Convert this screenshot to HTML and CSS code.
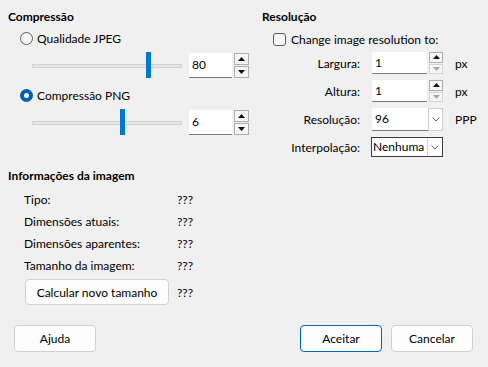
FILE: index.html
```html
<!DOCTYPE html>
<html lang="pt">
<head>
<meta charset="utf-8">
<title>Compressão de imagem</title>
<link rel="stylesheet" href="styles.css">
</head>
<body>
<div class="dialog">
  <div class="top">
    <section class="compress">
      <h2>Compressão</h2>
      <div class="radio-row"><span class="radio"></span><span>Qualidade JPEG</span></div>
      <div class="slider-row">
        <div class="slider"><div class="track"></div><div class="thumb" style="left:114px"></div></div>
        <div class="spin">
          <div class="field">80</div>
          <div class="btns">
            <span class="b"><svg width="7" height="4" viewBox="0 0 7 4"><path d="M0 4 L3.5 0 L7 4Z" fill="#111"/></svg></span>
            <span class="b"><svg width="7" height="4" viewBox="0 0 7 4"><path d="M0 0 L3.5 4 L7 0Z" fill="#111"/></svg></span>
          </div>
        </div>
      </div>
      <div class="radio-row second"><span class="radio on"></span><span>Compressão PNG</span></div>
      <div class="slider-row">
        <div class="slider"><div class="track"></div><div class="thumb" style="left:88px"></div></div>
        <div class="spin">
          <div class="field">6</div>
          <div class="btns">
            <span class="b"><svg width="7" height="4" viewBox="0 0 7 4"><path d="M0 4 L3.5 0 L7 4Z" fill="#111"/></svg></span>
            <span class="b"><svg width="7" height="4" viewBox="0 0 7 4"><path d="M0 0 L3.5 4 L7 0Z" fill="#111"/></svg></span>
          </div>
        </div>
      </div>
    </section>
    <section class="resol">
      <h2>Resolução</h2>
      <div class="check-row"><span class="check"></span><span>Change image resolution to:</span></div>
      <div class="form">
        <span class="lbl">Largura:</span>
        <div class="spin small">
          <div class="field">1</div>
          <div class="btns">
            <span class="b"><svg width="7" height="4" viewBox="0 0 7 4"><path d="M0 4 L3.5 0 L7 4Z" fill="#111"/></svg></span>
            <span class="b dis"><svg width="7" height="4" viewBox="0 0 7 4"><path d="M0 0 L3.5 4 L7 0Z" fill="#a8a8a8"/></svg></span>
          </div>
        </div>
        <span class="unit">px</span>

        <span class="lbl">Altura:</span>
        <div class="spin small">
          <div class="field">1</div>
          <div class="btns">
            <span class="b"><svg width="7" height="4" viewBox="0 0 7 4"><path d="M0 4 L3.5 0 L7 4Z" fill="#111"/></svg></span>
            <span class="b dis"><svg width="7" height="4" viewBox="0 0 7 4"><path d="M0 0 L3.5 4 L7 0Z" fill="#a8a8a8"/></svg></span>
          </div>
        </div>
        <span class="unit">px</span>

        <span class="lbl">Resolução:</span>
        <div class="combo">
          <div class="cfield">96</div>
          <span class="cbtn"><svg width="8" height="5" viewBox="0 0 8 5"><path d="M0.5 0.5 L4 4 L7.5 0.5" fill="none" stroke="#666" stroke-width="1"/></svg></span>
        </div>
        <span class="unit">PPP</span>

        <span class="lbl">Interpolação:</span>
        <div class="combo framed">
          <div class="cfield">Nenhuma</div>
          <span class="cbtn"><svg width="8" height="5" viewBox="0 0 8 5"><path d="M0.5 0.5 L4 4 L7.5 0.5" fill="none" stroke="#666" stroke-width="1"/></svg></span>
        </div>
        <span class="unit"></span>
      </div>
    </section>
  </div>

  <section class="info">
    <h2>Informações da imagem</h2>
    <div class="info-grid">
      <span>Tipo:</span><span>???</span>
      <span>Dimensões atuais:</span><span>???</span>
      <span>Dimensões aparentes:</span><span>???</span>
      <span>Tamanho da imagem:</span><span>???</span>
    </div>
    <div class="calc-row">
      <button class="btn calc">Calcular novo tamanho</button>
      <span>???</span>
    </div>
  </section>

  <div class="footer">
    <button class="btn">Ajuda</button>
    <div class="right-btns">
      <button class="btn default">Aceitar</button>
      <button class="btn">Cancelar</button>
    </div>
  </div>
</div>
</body>
</html>
```
FILE: styles.css
```css
* { box-sizing: border-box; }

html, body {
  margin: 0;
  width: 488px;
  height: 367px;
  overflow: hidden;
}

body {
  background: #f0f0f0;
  font-family: Lato, "Segoe UI", "Noto Sans", sans-serif;
  font-size: 12px;
  color: #000;
}

.dialog {
  height: 367px;
  display: flex;
  flex-direction: column;
}

.top {
  display: flex;
  padding: 9px 0 0 8px;
}

h2 {
  margin: 0;
  font-size: 12px;
  font-weight: 700;
  line-height: 16px;
}

.compress {
  width: 254px;
}

.radio-row {
  display: flex;
  align-items: center;
  gap: 4px;
  height: 20px;
  margin-top: 3px;
  padding-left: 12px;
}

.radio-row.second {
  margin-top: 7px;
}

.radio {
  width: 13px;
  height: 13px;
  border-radius: 50%;
  border: 1px solid #5c5c5c;
  background: #f7f7f7;
  flex: none;
}

.radio.on {
  background: #fff;
  border: 4px solid #005fb8;
}

.slider-row {
  display: flex;
  align-items: center;
  height: 25px;
  margin-top: 5px;
  padding-left: 24px;
}

.slider {
  position: relative;
  width: 150px;
  height: 25px;
}

.track {
  position: absolute;
  left: 0;
  right: 0;
  top: 11px;
  height: 4px;
  background: #e7e7e7;
  border: 1px solid #d2d2d2;
}

.thumb {
  position: absolute;
  top: -1px;
  width: 5px;
  height: 26px;
  background: #0078d4;
}

.spin {
  display: flex;
  margin-left: 7px;
  height: 25px;
}

.field {
  width: 43px;
  height: 100%;
  background: #fff;
  border-bottom: 1px solid #7a7a7a;
  padding-left: 3px;
  line-height: 24px;
}

.btns {
  display: flex;
  flex-direction: column;
  gap: 1px;
  width: 15px;
  margin-left: 2px;
}

.btns .b {
  flex: 1;
  border: 1px solid #adadad;
  background: #f6f6f6;
  display: flex;
  align-items: center;
  justify-content: center;
}

.btns .b.dis {
  border-color: #d4d4d4;
}

.resol {
  flex: 1;
}

.check-row {
  display: flex;
  align-items: center;
  gap: 5px;
  height: 20px;
  margin-top: 4px;
  padding-left: 11px;
}

.check {
  width: 13px;
  height: 13px;
  border: 1px solid #5c5c5c;
  border-radius: 3px;
  background: #f7f7f7;
  flex: none;
}

.form {
  display: grid;
  grid-template-columns: 98px 71px auto;
  grid-auto-rows: 22px;
  column-gap: 12px;
  row-gap: 6px;
  align-items: center;
  margin-top: 3px;
}

.lbl {
  text-align: right;
}

.spin.small {
  margin-left: 0;
  height: 22px;
}

.spin.small .field {
  width: 55px;
  line-height: 21px;
}

.spin.small .btns {
  width: 14px;
}

.combo {
  display: flex;
  height: 23px;
  width: 71px;
}

.cfield {
  flex: 1;
  background: #fff;
  border-bottom: 1px solid #7a7a7a;
  padding-left: 3px;
  line-height: 22px;
  overflow: hidden;
  white-space: nowrap;
}

.cbtn {
  width: 15px;
  background: #fff;
  border: 1px solid #cfcfcf;
  display: flex;
  align-items: center;
  justify-content: center;
}

.combo.framed {
  height: 20px;
  width: 72px;
  margin-left: -1px;
  border: 1px solid #3c3c3c;
}

.combo.framed .cfield {
  border-bottom: none;
  padding-left: 1px;
  line-height: 18px;
}

.combo.framed .cbtn {
  border-top: none;
  border-bottom: none;
  border-right: none;
}

.info {
  padding: 10px 0 0 8px;
}

.info-grid {
  display: grid;
  grid-template-columns: 153px auto;
  grid-auto-rows: 22px;
  align-items: center;
  padding-left: 16px;
  margin-top: 4px;
}

.calc-row {
  display: flex;
  align-items: center;
  gap: 8px;
  margin-top: 3px;
  padding-left: 17px;
}

.btn {
  font: inherit;
  color: #000;
  background: #fdfdfd;
  border: 1px solid #d0d0d0;
  border-radius: 4px;
  height: 27px;
  width: 82px;
  padding: 0;
}

.btn.calc {
  width: 144px;
  height: 26px;
}

.btn.default {
  border-color: #0067c0;
}

.footer {
  margin-top: auto;
  display: flex;
  justify-content: space-between;
  padding: 0 15px 15px 14px;
}

.right-btns {
  display: flex;
  gap: 9px;
}
```
